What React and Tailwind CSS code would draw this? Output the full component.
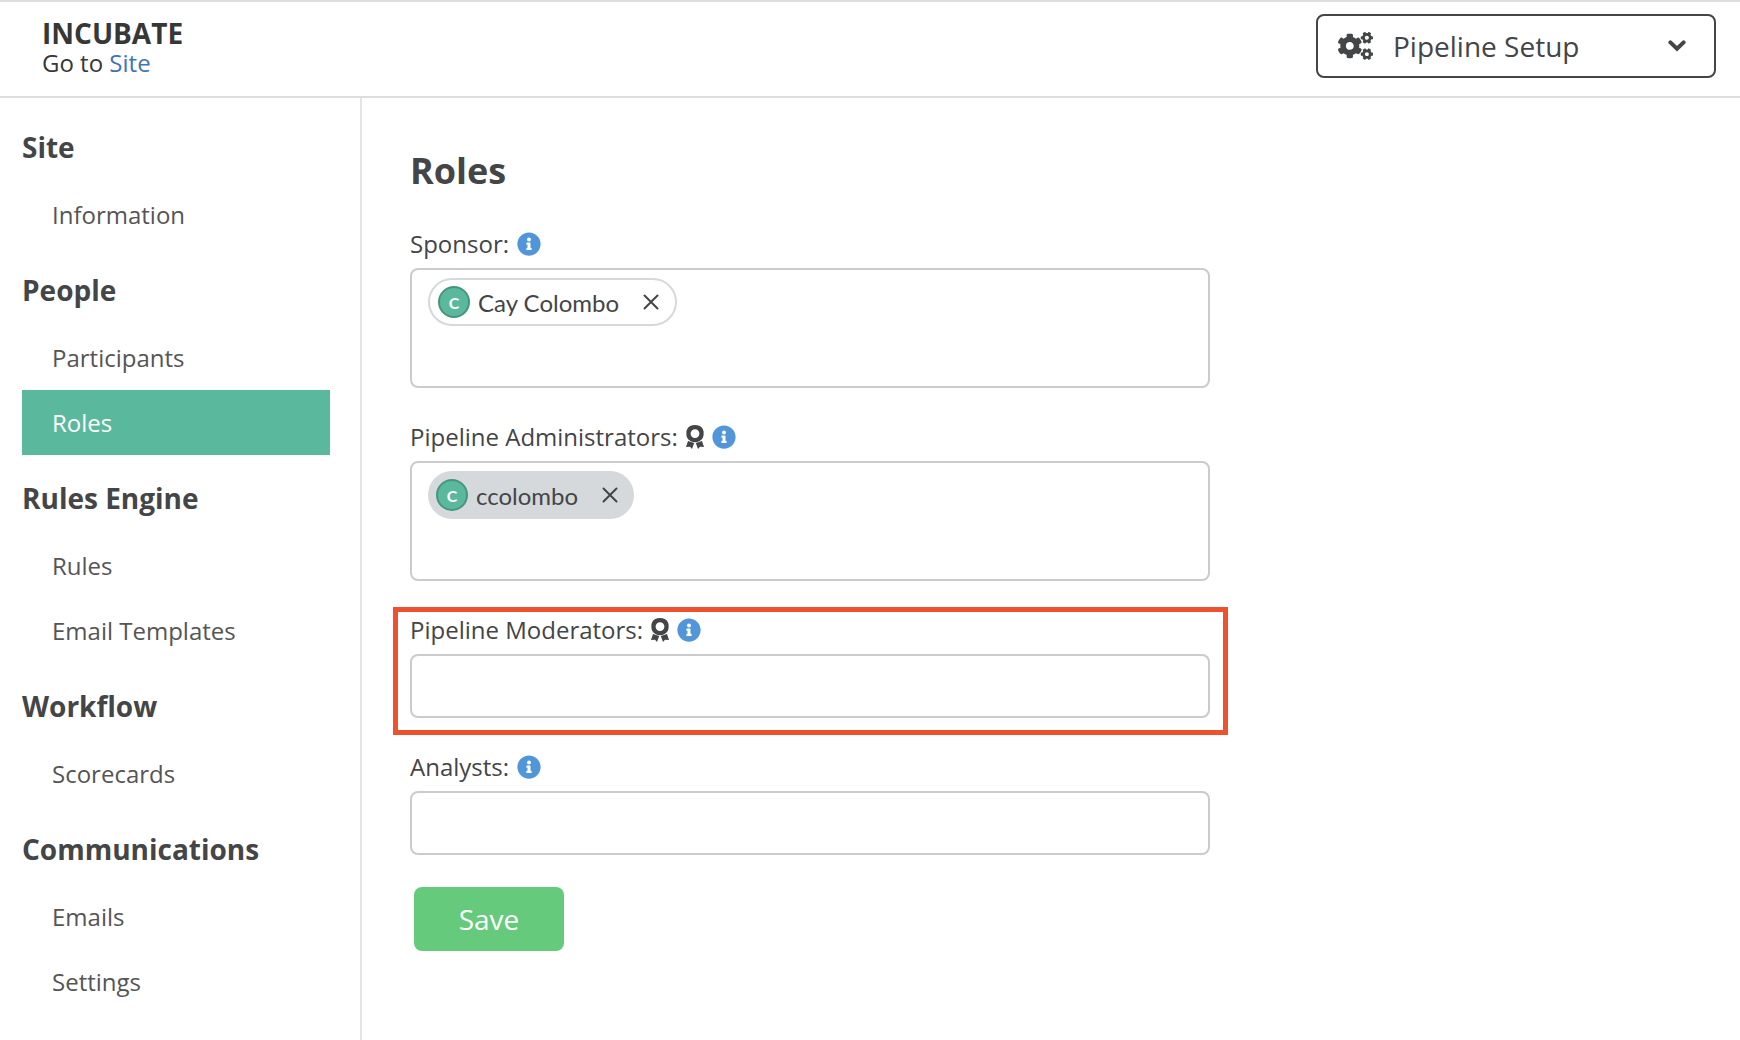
import React, { useState } from 'react';
import { FaCogs, FaInfoCircle } from 'react-icons/fa';

const navigation = [
  { title: 'Site', items: ['Information'] },
  { title: 'People', items: ['Participants', 'Roles'] },
  { title: 'Rules Engine', items: ['Rules', 'Email Templates'] },
  { title: 'Workflow', items: ['Scorecards'] },
  { title: 'Communications', items: ['Emails', 'Settings'] },
];

const AwardIcon = () => (
  <svg viewBox="0 0 18 24" className="w-[18px] h-6" fill="currentColor" aria-hidden="true">
    <path
      fillRule="evenodd"
      d="M9 0 L11.4 .3 L13.8 1 L15.8 2.5 L17 4.4 L17.6 6.4 L17.6 10 L17 12.4 L15.6 14.4 L13.6 16 L11.4 16.9 L9 17.2 L6.6 16.9 L4.4 16 L2.4 14.4 L1 12.4 L.4 10 L.4 6.4 L1 4.4 L2.2 2.5 L4.2 1 L6.6 .3 Z M9 4.2 A4.4 4.4 0 1 0 9 13 A4.4 4.4 0 1 0 9 4.2 Z"
    />
    <path d="M2 16 L8.2 18 L6 24 L4 21.8 L0 22 Z" />
    <path d="M16 16 L9.8 18 L12 24 L14 21.8 L18 22 Z" />
  </svg>
);

const CloseIcon = () => (
  <svg viewBox="0 0 16 16" className="w-4 h-4" fill="none" stroke="currentColor" strokeWidth="2" strokeLinecap="round" aria-hidden="true">
    <path d="M1.5 1.5 L14.5 14.5 M14.5 1.5 L1.5 14.5" />
  </svg>
);

const ChevronIcon = () => (
  <svg viewBox="0 0 18 12" className="w-[18px] h-3" fill="none" stroke="currentColor" strokeWidth="4" strokeLinecap="round" aria-hidden="true">
    <path d="M2.4 2.4 L9 8.8 L15.6 2.4" />
  </svg>
);

const Chip = ({ name, filled, onRemove }) => (
  <span
    className={`flex items-center h-12 pl-2 pr-4 rounded-full font-[Lato,sans-serif] ${
      filled ? 'bg-[#d5d9dc]' : 'border-2 border-[#d5d9dc]'
    }`}
  >
    <span className="flex items-center justify-center w-8 h-8 pt-0.5 rounded-full border-2 border-[#47957c] bg-[#5ab99d] text-white text-base font-bold">
      C
    </span>
    <span className="ml-2 pt-0.5 text-2xl">{name}</span>
    <button type="button" aria-label={`Remove ${name}`} onClick={onRemove} className="ml-6">
      <CloseIcon />
    </button>
  </span>
);

const Field = ({ id, label, award, highlighted, tall, children }) => (
  <div className="relative mb-8">
    <div className="flex items-center h-[33px] mb-2">
      <label htmlFor={id} className="text-2xl">{label}</label>
      <span className="flex items-center gap-2 ml-2">
        {award && <AwardIcon />}
        <FaInfoCircle className="w-6 h-6 text-[#5196d8]" />
      </span>
    </div>
    <div
      className={`flex flex-wrap items-start content-start gap-2 px-4 py-2 border-2 border-[#cbcbcb] rounded-lg ${
        tall ? 'min-h-[120px]' : 'min-h-16'
      }`}
    >
      {children}
      <input id={id} type="text" className="flex-1 min-w-0 h-11 text-2xl outline-none" />
    </div>
    {highlighted && (
      <div className="absolute -top-1.5 -bottom-[17px] -left-[17px] -right-[18px] border-5 border-[#ee512d] pointer-events-none" />
    )}
  </div>
);

export default function App() {
  const [active, setActive] = useState('Roles');
  const [sponsors, setSponsors] = useState(['Cay Colombo']);
  const [admins, setAdmins] = useState(['ccolombo']);

  return (
    <div className="min-h-screen flex flex-col bg-white text-[#444547] font-['Open_Sans',sans-serif]">
      {/* Header */}
      <header className="flex items-start justify-between pl-[42px] pr-6 pt-3 pb-[18px] border-y-2 border-[#dddddd]">
        <div className="pt-1 text-[#373737]">
          <div className="text-[28px] leading-[30px] font-bold">INCUBATE</div>
          <div className="text-2xl leading-[30px]">
            Go to <a href="#site" className="text-[#3f74b5]">Site</a>
          </div>
        </div>
        <div className="flex items-center w-[400px] h-16 px-5 border-2 border-[#444547] rounded-lg">
          <FaCogs className="w-[35px] h-7" />
          <select aria-label="Section" className="flex-1 mx-5 text-[28px] leading-[38px] appearance-none outline-none bg-transparent">
            <option>Pipeline Setup</option>
          </select>
          <span className="mr-2">
            <ChevronIcon />
          </span>
        </div>
      </header>

      <div className="flex flex-1">
        {/* Sidebar */}
        <nav className="w-[362px] shrink-0 pt-1.5 pl-[22px] pr-[30px] border-r-2 border-[#e5e5e5]">
          {navigation.map((group) => (
            <div key={group.title}>
              <h2 className="pt-6 pb-4 text-[28px] leading-[38px] font-bold">{group.title}</h2>
              <ul>
                {group.items.map((item) => (
                  <li key={item}>
                    <a
                      href={`#${item}`}
                      onClick={() => setActive(item)}
                      className={`block px-[30px] py-4 text-2xl leading-[33px] ${
                        active === item ? 'bg-[#5ab99d] text-white' : 'text-[#555555]'
                      }`}
                    >
                      {item}
                    </a>
                  </li>
                ))}
              </ul>
            </div>
          ))}
        </nav>

        {/* Roles form */}
        <main className="flex-1 pt-12 px-12">
          <form className="max-w-[800px]" onSubmit={(e) => e.preventDefault()}>
            <h1 className="mb-8 text-4xl leading-[49px] font-bold">Roles</h1>

            <Field id="sponsor" label="Sponsor:" tall>
              {sponsors.map((name) => (
                <Chip key={name} name={name} onRemove={() => setSponsors([])} />
              ))}
            </Field>
            <Field id="admins" label="Pipeline Administrators:" award tall>
              {admins.map((name) => (
                <Chip key={name} name={name} filled onRemove={() => setAdmins([])} />
              ))}
            </Field>
            <Field id="moderators" label="Pipeline Moderators:" award highlighted />
            <Field id="analysts" label="Analysts:" />

            <button type="submit" className="w-[150px] h-16 ml-1 rounded-lg bg-[#65ca7b] text-white text-[28px]">
              Save
            </button>
          </form>
        </main>
      </div>
    </div>
  );
}
